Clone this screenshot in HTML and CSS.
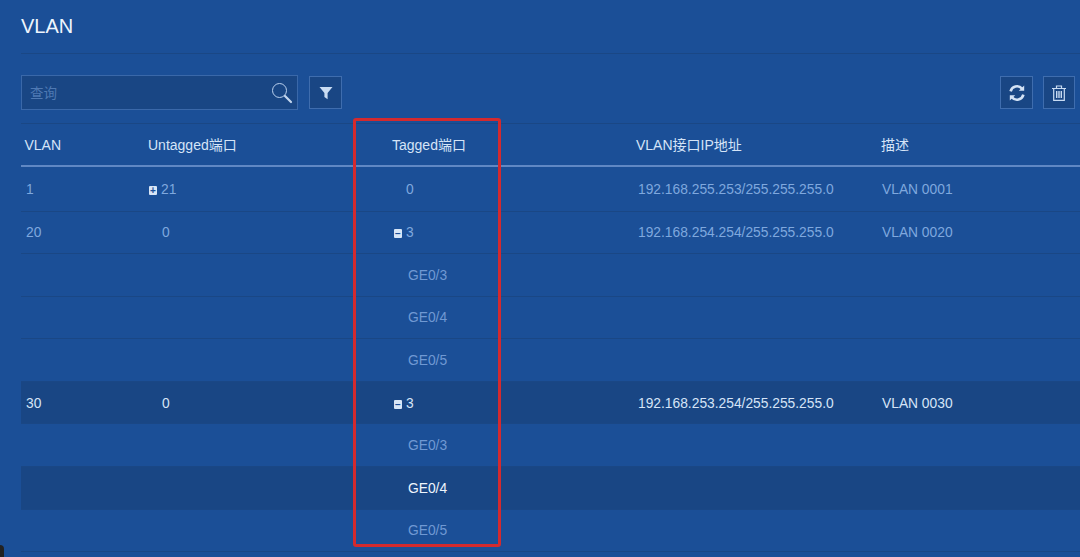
FILE: index.html
```html
<!DOCTYPE html>
<html lang="en">
<head>
    <meta charset="UTF-8">
    <meta name="viewport" content="width=device-width, initial-scale=1.0">
    <title>VLAN</title>
    <link rel="stylesheet" href="styles.css">
</head>
<body>
    <div class="page">
        <h1 class="title">VLAN</h1>

        <div class="toolbar">
            <div class="search">
                <span class="search-text">查询</span>
                <svg class="search-icon" width="22" height="22" viewBox="0 0 22 22">
                    <circle cx="8.5" cy="8.5" r="7" fill="none" stroke="#b9d0ee" stroke-width="1"/>
                    <path d="M14 14l6 6" stroke="#c3d6ee" stroke-width="2.2" stroke-linecap="round"/>
                </svg>
            </div>
            <button class="tool-btn filter-btn">
                <svg width="14" height="14" viewBox="0 0 14 14"><path d="M0.5 1h13L8.6 7v6.2L5.4 11V7z" fill="#c9dcf3"/></svg>
            </button>
            <div class="tool-right">
                <button class="tool-btn">
                    <svg width="18" height="18" viewBox="0 0 18 18" fill="none" stroke="#d3e2f5" stroke-width="2.6">
                        <path d="M2.6 7.4A6.6 6.6 0 0 1 14 4.6"/>
                        <path d="M15.4 10.6A6.6 6.6 0 0 1 4 13.4"/>
                        <path d="M16.2 1.4v5.4h-5.4z" fill="#d3e2f5" stroke="none"/>
                        <path d="M1.8 16.6v-5.4h5.4z" fill="#d3e2f5" stroke="none"/>
                    </svg>
                </button>
                <button class="tool-btn trash-btn">
                    <svg width="16" height="18" viewBox="0 0 16 18" fill="none" stroke="#c9dcf3" stroke-width="1.2">
                        <path d="M1 4.5h14M5.5 4.5V2h5v2.5"/>
                        <path d="M2.7 4.5v11.8h10.6V4.5"/>
                        <path d="M5.7 7v7M8 7v7M10.3 7v7" stroke-width="1.4"/>
                    </svg>
                </button>
            </div>
        </div>

        <table class="vlan-table">
            <thead>
                <tr>
                    <th class="col-vlan">VLAN</th>
                    <th class="col-untagged">Untagged端口</th>
                    <th class="col-tagged">Tagged端口</th>
                    <th class="col-ip">VLAN接口IP地址</th>
                    <th class="col-desc">描述</th>
                </tr>
            </thead>
            <tbody>
                <tr class="first">
                    <td>1</td>
                    <td><span class="tree-icon">+</span>21</td>
                    <td class="indent">0</td>
                    <td>192.168.255.253/255.255.255.0</td>
                    <td class="desc">VLAN 0001</td>
                </tr>
                <tr>
                    <td>20</td>
                    <td class="indent">0</td>
                    <td><span class="tree-icon">−</span>3</td>
                    <td>192.168.254.254/255.255.255.0</td>
                    <td class="desc">VLAN 0020</td>
                </tr>
                <tr><td></td><td></td><td class="port">GE0/3</td><td></td><td></td></tr>
                <tr><td></td><td></td><td class="port">GE0/4</td><td></td><td></td></tr>
                <tr><td></td><td></td><td class="port">GE0/5</td><td></td><td></td></tr>
                <tr class="active">
                    <td>30</td>
                    <td class="indent">0</td>
                    <td><span class="tree-icon">−</span>3</td>
                    <td>192.168.253.254/255.255.255.0</td>
                    <td class="desc">VLAN 0030</td>
                </tr>
                <tr><td></td><td></td><td class="port">GE0/3</td><td></td><td></td></tr>
                <tr class="active"><td></td><td></td><td class="port">GE0/4</td><td></td><td></td></tr>
                <tr><td></td><td></td><td class="port">GE0/5</td><td></td><td></td></tr>
            </tbody>
        </table>
    </div>

    <!-- red annotation drawn over the table -->
    <div class="highlight"></div>
    <div class="corner"></div>
</body>
</html>
```

FILE: styles.css
```css
html, body {
    height: 100%;
}
body {
    font-family: "Liberation Sans", Arial, "Noto Sans CJK SC", sans-serif;
    margin: 0;
    padding: 0;
    background-color: #1b4f97;
    color: #7fa8de;
    overflow: hidden;
    position: relative;
}
.page {
    padding-left: 21px;
}
.title {
    margin: 0;
    height: 53px;
    line-height: 53px;
    font-size: 20px;
    font-weight: normal;
    color: #eef5fd;
    border-bottom: 1px solid #1a4785;
}
.toolbar {
    display: flex;
    align-items: center;
    height: 70px;
    box-sizing: border-box;
    padding: 8px 5px 0 0;
    border-bottom: 1px solid #1a4785;
}
.search {
    display: flex;
    align-items: center;
    justify-content: space-between;
    width: 277px;
    height: 35px;
    box-sizing: border-box;
    background-color: #194684;
    border: 1px solid #3a68a9;
    padding: 0 4px 0 8px;
    font-size: 13.5px;
    color: #4f79b3;
}
.search-text {
    margin-bottom: 2px;
}
.search-icon {
    margin-top: 1px;
}
.tool-btn {
    display: flex;
    align-items: center;
    justify-content: center;
    width: 33px;
    height: 33px;
    padding: 0;
    background-color: #194684;
    border: 1px solid #3f6dae;
}
.filter-btn {
    margin-left: 11px;
}
.tool-right {
    display: flex;
    gap: 10px;
    margin-left: auto;
}
.trash-btn {
    width: 32px;
}
.vlan-table {
    width: 1059px;
    table-layout: fixed;
    border-collapse: collapse;
    font-size: 13.8px;
}
.vlan-table th {
    height: 42px;
    padding: 2px 0 0 3px;
    text-align: left;
    vertical-align: baseline;
    line-height: 38px;
    font-weight: normal;
    font-size: 14px;
    color: #d5e4f7;
    border-bottom: 2px solid #6088c4;
    box-sizing: border-box;
}
.vlan-table td {
    height: 42.6px;
    padding: 1px 0 0 5px;
    border-bottom: 1px solid #1a4785;
    box-sizing: border-box;
}
.vlan-table tr.first td {
    height: 45px;
    padding-top: 2px;
}
.col-vlan { width: 123px; }
.col-untagged { width: 245px; }
.col-tagged { width: 244px; }
.col-ip { width: 245px; }
.vlan-table .col-vlan {
    padding-left: 3.5px;
}
.vlan-table .col-untagged {
    padding-left: 4px;
}
.vlan-table .col-tagged,
.vlan-table .col-ip,
.vlan-table .col-desc {
    padding-left: 3px;
}
.vlan-table td.indent {
    padding-left: 17px;
}
.vlan-table td:nth-child(2).indent {
    padding-left: 18px;
}
.vlan-table td.desc {
    padding-left: 4px;
}
.vlan-table td.port {
    padding-left: 19px;
    color: #7099d3;
}
.tree-icon {
    display: inline-block;
    width: 8px;
    height: 9px;
    margin-right: 4px;
    background-color: #d8e6f7;
    color: #1b4f97;
    border-radius: 1px;
    font-size: 10px;
    font-weight: bold;
    line-height: 9px;
    text-align: center;
}
.vlan-table tr.active td {
    background-color: #194684;
    color: #d5e4f7;
}
.vlan-table tr.active td.port {
    color: #eef5fd;
}
.highlight {
    position: absolute;
    left: 353px;
    top: 118px;
    width: 148px;
    height: 429px;
    box-sizing: border-box;
    border: 3px solid #d42a2e;
    border-radius: 3px;
}
.corner {
    position: absolute;
    left: 0;
    top: 545px;
    width: 4px;
    height: 12px;
    background-color: #222;
    border-radius: 0 4px 0 0;
}
```
